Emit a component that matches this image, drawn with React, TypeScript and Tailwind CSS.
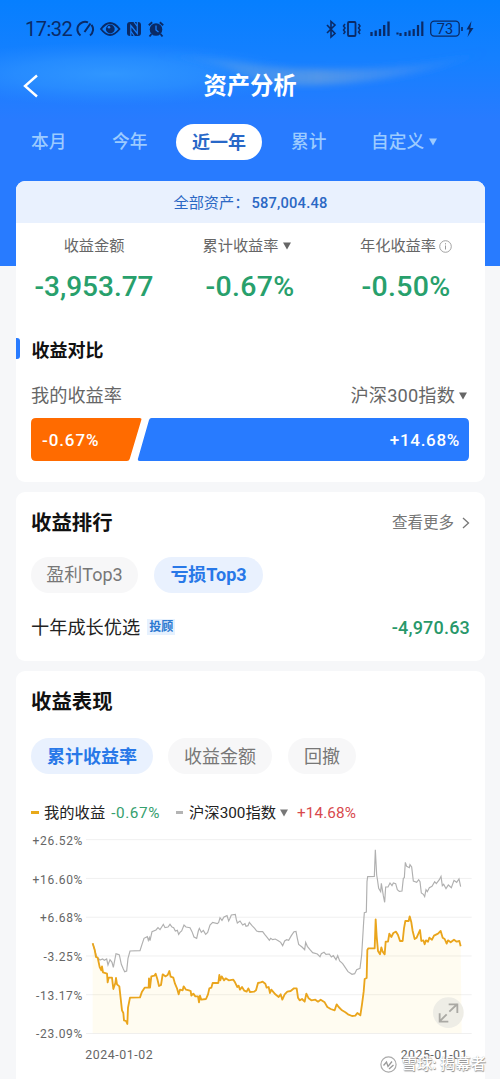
import React from 'react';

const GREY_SERIES =
  '278,355 284,375 290,396 300,405 308,402 313,406 320,402 324,420 330,404 336,412 340,427 348,386 354,388 358,390 364,418 370,432 374,440 380,438 384,400 390,378 420,377 426,358 432,340 442,335 445,346 448,338 450,347 456,320 468,315 474,308 480,314 485,306 490,298 495,308 504,306 510,298 516,306 521,308 526,318 532,316 536,328 540,322 545,318 552,300 558,306 570,308 576,320 582,336 590,340 595,318 598,310 604,322 610,316 617,328 623,322 630,300 638,292 652,296 656,292 660,278 666,286 672,276 681,272 686,288 690,280 694,270 706,268 709,284 712,294 720,288 728,300 735,296 738,304 744,302 748,292 756,302 764,310 770,318 776,320 788,320 794,328 802,338 808,346 812,340 818,344 826,342 836,348 842,352 848,362 854,348 860,344 866,346 874,332 882,320 888,319 892,340 896,358 906,366 914,374 917,352 922,364 930,374 938,383 952,387 960,395 964,386 972,382 978,388 988,387 994,396 1000,392 1008,404 1013,392 1019,408 1028,416 1036,428 1044,440 1056,448 1064,446 1070,434 1080,430 1085,390 1091,290 1093,263 1099,261 1101,170 1103,155 1123,154 1126,74 1130,150 1132,162 1136,190 1142,200 1144,175 1150,212 1154,232 1157,186 1164,186 1170,174 1176,182 1180,174 1187,176 1192,194 1198,199 1206,198 1210,160 1213,158 1216,112 1220,124 1228,128 1230,119 1235,126 1240,168 1250,172 1256,164 1260,170 1264,204 1270,208 1274,215 1278,194 1282,200 1288,188 1296,184 1304,170 1309,176 1318,164 1323,154 1327,182 1331,178 1338,191 1345,180 1354,188 1362,166 1370,172 1377,162 1380,176 1382,185';

const GOLD_SERIES =
  '278,355 284,374 288,396 293,398 299,426 304,436 306,424 309,442 321,446 323,472 326,458 336,458 340,492 346,474 348,459 351,478 358,484 362,520 366,556 370,564 372,586 378,588 382,597 384,548 390,518 420,517 426,500 434,488 446,488 447,460 450,488 454,454 463,452 467,446 472,462 477,483 483,480 488,448 496,454 503,450 508,438 512,455 520,458 525,476 531,490 536,508 540,494 548,496 551,484 558,494 567,496 572,498 574,512 580,506 586,514 594,514 597,532 600,512 604,524 618,522 624,508 628,490 634,488 638,474 655,474 658,450 661,466 665,454 672,466 677,460 686,466 700,464 705,472 712,486 716,482 720,494 726,486 733,497 740,500 745,490 750,501 762,500 768,496 774,474 782,472 788,470 796,476 800,488 806,486 810,504 814,494 826,508 836,516 842,508 847,524 854,508 862,500 872,498 882,490 890,490 894,518 899,526 906,522 914,530 919,506 926,520 934,526 946,524 954,530 962,524 974,532 982,546 992,552 1004,556 1010,538 1016,546 1026,556 1036,562 1044,568 1056,573 1066,572 1072,564 1081,571 1086,538 1091,500 1094,462 1100,459 1102,375 1105,370 1124,370 1127,283 1130,334 1134,378 1140,388 1144,367 1148,380 1154,388 1157,350 1164,350 1168,326 1174,336 1180,324 1188,320 1194,330 1200,348 1208,348 1212,310 1216,288 1226,288 1229,274 1234,292 1238,318 1244,342 1250,338 1260,315 1264,348 1270,346 1274,358 1278,346 1284,350 1288,338 1296,344 1302,332 1314,326 1322,318 1328,338 1334,342 1340,356 1344,346 1352,352 1362,344 1370,350 1378,348 1382,364';

const Y_LABELS = ['+26.52%', '+16.60%', '+6.68%', '-3.25%', '-13.17%', '-23.09%'];

const Caret: React.FC<{ className?: string }> = ({ className = '' }) => (
  <svg viewBox="0 0 8 8" className={`h-2 w-2 fill-current ${className}`}>
    <path d="M0 .5h8L4 7.5z" />
  </svg>
);

const StatusBar = () => (
  <div className="flex h-[57px] items-center pl-[25px] pr-[25px] text-[#0a2a66]">
    <span className="w-[50px] text-[20px] leading-none tracking-[-0.5px]">17:32</span>
    <svg width="92" height="20" viewBox="0 0 92 20" fill="none" stroke="currentColor" strokeWidth="1.6" className="ml-px">
      {/* gauge */}
      <path d="M4.500 16.500A7.600 7.600 0 0 1 12 3.400M15.500 5.800A7.600 7.600 0 0 1 14 16.500M8.500 13l6-8.500" strokeWidth="2" />
      {/* eye */}
      <path d="M25 10q9-12 18.500 0q-9.500 12-18.500 0z" strokeWidth="1.8" />
      <circle cx="34.300" cy="10" r="4.400" fill="currentColor" stroke="none" />
      <circle cx="33" cy="8.300" r="1.300" fill="#1a80ff" stroke="none" />
      {/* nfc */}
      <rect x="51" y="3" width="14" height="14" rx="3" fill="currentColor" stroke="none" />
      <path d="M54.800 17V6.500l6.500 8V3M58 3l3.300 4.500M54.800 12l3.500 5" stroke="#147fff" strokeWidth="1.200" />
      {/* alarm */}
      <circle cx="80" cy="10.500" r="6.300" fill="currentColor" stroke="none" />
      <path d="M72.800 6.200l3.400-3M87.200 6.200l-3.400-3M75.500 15l-2 2.500M84.500 15l2 2.500" strokeWidth="1.900" />
      <path d="M80 6.500v4.500l2.500 2" stroke="#147fff" strokeWidth="1.300" />
    </svg>
    <svg width="150" height="20" viewBox="0 0 150 20" fill="none" stroke="currentColor" className="ml-auto">
      {/* bluetooth */}
      <path d="M2 6l8 8.500-4 3.500V2.500l4 3.500L2 14" strokeWidth="1.600" />
      {/* vibrate */}
      <rect x="23" y="3" width="7.500" height="14" rx="1" strokeWidth="1.800" />
      <path d="M20 5l-1.500 2 1.500 2-1.500 2 1.500 2-1.500 2M33.500 5L35 7l-1.500 2 1.500 2-1.500 2 1.500 2" strokeWidth="1.500" />
      {/* signals */}
      <path d="M46.500 17v-4M50.700 17v-5.500M55 17v-7M59.200 17V6M63.500 17V2.500" strokeWidth="2.300" />
      <path d="M72.500 13.500v2M75.500 14v3M80.500 17v-4M84.500 17v-5.500M88.700 17v-7M93 17V6M97.300 17V2.500" strokeWidth="2.200" />
      {/* battery */}
      <rect x="105.700" y="2.200" width="28.500" height="15" rx="3.600" strokeWidth="1.300" />
      <path d="M137 8v4" strokeWidth="1.600" />
      <path d="M146.500 2l-5 8.500h3L142.500 18l6-9h-3.200z" fill="currentColor" stroke="none" />
      <text x="120" y="14.800" textAnchor="middle" fontSize="14.500" fill="currentColor" stroke="none">73</text>
    </svg>
  </div>
);

const HeaderGlow = () => (
  <svg className="absolute left-0 top-0 -z-10" width="500" height="266" viewBox="0 0 500 266">
    <defs>
      <linearGradient id="sky" x1="0" y1="0" x2="0" y2="1">
        <stop offset="0" stopColor="#067fff" />
        <stop offset=".22" stopColor="#1580ff" />
        <stop offset=".45" stopColor="#287bff" />
        <stop offset="1" stopColor="#287bff" />
      </linearGradient>
      <radialGradient id="glow">
        <stop offset="0" stopColor="#3399ff" stopOpacity=".9" />
        <stop offset=".5" stopColor="#2f94ff" stopOpacity=".6" />
        <stop offset="1" stopColor="#2a8aff" stopOpacity="0" />
      </radialGradient>
      <linearGradient id="ribbon" x1="0" y1="0" x2="1" y2="0">
        <stop offset="0" stopColor="#4a9cf5" stopOpacity="0" />
        <stop offset=".3" stopColor="#5099ec" stopOpacity=".7" />
        <stop offset=".5" stopColor="#5a9ae6" stopOpacity=".85" />
        <stop offset=".7" stopColor="#4792f2" stopOpacity=".7" />
        <stop offset="1" stopColor="#3a8cf8" stopOpacity="0" />
      </linearGradient>
      <filter id="soft" x="-10%" y="-50%" width="120%" height="200%">
        <feGaussianBlur stdDeviation="3" />
      </filter>
    </defs>
    <rect width="500" height="266" fill="url(#sky)" />
    <ellipse cx="110" cy="74" rx="190" ry="32" fill="url(#glow)" />
    <path d="M150 55Q210 57 250 64T360 69T490 50Q430 76 350 83T240 74T150 55z" fill="url(#ribbon)" filter="url(#soft)" />
  </svg>
);

const RANGE_TEXT = 'text-[17.700px] font-medium text-[#9ccbff]';

const RangeTabs = () => (
  <div className="flex h-[54px] items-center pl-[31px]">
    <span className={`w-[81px] pt-px ${RANGE_TEXT}`}>本月</span>
    <span className={`w-16 pt-px ${RANGE_TEXT}`}>今年</span>
    <span className="flex h-9 w-[86px] items-center justify-center rounded-full bg-white pt-px text-[18px] font-bold text-[#2868c8]">
      近一年
    </span>
    <span className={`ml-[29px] w-[80px] pt-px ${RANGE_TEXT}`}>累计</span>
    <span className={`flex items-center gap-[5px] pt-px ${RANGE_TEXT}`}>
      自定义
      <Caret />
    </span>
  </div>
);

const Stat: React.FC<{ label: string; value: string; extra?: React.ReactNode; className: string }> = ({ label, value, extra, className }) => (
  <div className={`flex flex-col items-center ${className}`}>
    <div className="flex h-6 items-center text-[15.200px] text-[#666]">
      {label}
      {extra}
    </div>
    <div className="mt-2.5 h-[38px] leading-[38px] font-medium text-[#28a06c]">{value}</div>
  </div>
);

const SummaryCard = () => (
  <section className="h-[301px] overflow-hidden rounded-[9px] bg-white">
    <div className="flex h-[42px] items-center justify-center bg-[#e9f1fe] pt-[3px] text-[15.200px] text-[#2b68c4]">
      <span>全部资产：</span>
      <span className="ml-[2px] text-[14.700px] font-medium tracking-[0.200px]">587,004.48</span>
    </div>
    <div className="flex pt-[11px]">
      <Stat label="收益金额" value="-3,953.77" className="w-[156px] text-[28px]" />
      <Stat
        label="累计收益率"
        value="-0.67%"
        extra={<Caret className="ml-[5px]" />}
        className="-ml-[2px] w-[158px] text-[28.500px] tracking-[0.300px] [&>:first-child]:-ml-1 [&>:first-child]:tracking-normal [&>:last-child]:ml-[2px]"
      />
      <Stat
        label="年化收益率"
        value="-0.50%"
        extra={
          <svg className="ml-[3px] h-[13px] w-[13px]" viewBox="0 0 13 13" fill="none" stroke="#999">
            <circle cx="6.500" cy="6.500" r="5.800" strokeWidth=".9" />
            <path d="M6.500 5.500v4M6.500 3.200v1.200" />
          </svg>
        }
        className="w-[156px] text-[28.500px] tracking-[0.300px] [&>:first-child]:tracking-normal"
      />
    </div>
    <div className="mt-[29px] flex h-7 items-center">
      <i className="-mt-[2px] h-[21px] w-[3.500px] rounded-r-[3px] bg-[#287bff]" />
      <h2 className="ml-[12px] pt-[3px] text-[18px] font-bold leading-7 text-[#111]">收益对比</h2>
    </div>
    <div className="mx-[15px] mt-[19px] flex h-7 items-center justify-between text-[18.200px] text-[#666]">
      <span>我的收益率</span>
      <span className="mr-[3px] flex items-center gap-1 tracking-[0.150px]">
        沪深300指数
        <Caret />
      </span>
    </div>
    <div className="relative mx-[15px] mt-[8px] flex h-[43px] items-center justify-between px-[11px] pt-[2px] text-[17px] font-medium text-white">
      <svg className="absolute left-0 top-0" width="438" height="43" viewBox="0 0 438 43">
        <path d="M5 0H108.500Q111 0 110.300 2L98.700 41Q98 43 96 43H5Q0 43 0 38V5Q0 0 5 0z" fill="#ff6b00" />
        <path d="M120.500 0H433Q438 0 438 5V38Q438 43 433 43H109Q106.200 43 107 40.500L118 2Q118.700 0 120.500 0z" fill="#287bff" />
      </svg>
      <span className="relative tracking-[0.900px]">-0.67%</span>
      <span className="relative -mr-px tracking-[0.700px]">+14.68%</span>
    </div>
  </section>
);

const Pill: React.FC<{ children: React.ReactNode; active?: boolean; className: string }> = ({ children, active, className }) => (
  <span
    className={`flex h-9 items-center justify-center rounded-full text-[18px] ${
      active ? 'bg-[#e9f1fe] font-bold text-[#2878e8]' : 'bg-[#f7f7f8] text-[#777]'
    } ${className}`}
  >
    {children}
  </span>
);

const RankingCard = () => (
  <section className="mt-[9.500px] h-[169px] rounded-[9px] bg-white px-[15px] pt-[17px]">
    <div className="flex h-[30px] items-center justify-between">
      <h2 className="text-[20.400px] font-bold text-[#111]">收益排行</h2>
      <span className="flex items-center text-[15.500px] text-[#777]">
        查看更多
        <svg className="-mt-[2px] ml-[8px]" width="8" height="12" viewBox="0 0 8 12" fill="none" stroke="currentColor" strokeWidth="1.300">
          <path d="M1 1l5.500 5L1 11" />
        </svg>
      </span>
    </div>
    <div className="mt-[18px] flex gap-4">
      <Pill className="w-[107px]">盈利Top3</Pill>
      <Pill active className="w-[109px]">亏损Top3</Pill>
    </div>
    <div className="mt-[21px] flex h-7 items-center">
      <span className="text-[18.200px] text-[#222]">十年成长优选</span>
      <span className="-mt-px ml-[7px] flex h-4 w-[28px] items-center justify-center bg-[#e6f1fe] text-[12px] font-bold text-[#2b78d0]">投顾</span>
      <span className="ml-auto text-[18px] font-medium tracking-[0.200px] text-[#28986a]">-4,970.63</span>
    </div>
  </section>
);

const PerformanceChart = () => (
  <svg className="block" width="469" height="254" viewBox="48 0 1407 762">
    {Y_LABELS.map((label, i) => (
      <g key={label}>
        <line x1="258" x2="1415" y1={44 + i * 116.3} y2={44 + i * 116.3} stroke="#f0f0f0" strokeWidth="3" />
        <text x="249" y={60 + i * 116} textAnchor="end" fontSize="36" letterSpacing="2" fill="#666">
          {label}
        </text>
      </g>
    ))}
    <polygon points={`278,625 ${GOLD_SERIES} 1385,625`} fill="#ffd83a" fillOpacity=".07" />
    <polyline points={GREY_SERIES} fill="none" stroke="#b0b0b0" strokeWidth="3.500" />
    <polyline points={GOLD_SERIES} fill="none" stroke="#eaa51c" strokeWidth="5.500" strokeLinejoin="round" />
    <circle cx="1345" cy="563" r="46" fill="#eeede6" />
    <path d="M1348 560l24-23M1346 538h26v26M1340 568l-21 21M1319 565v25h26" fill="none" stroke="#aaa9a4" strokeWidth="5.500" />
    <text x="256" y="702" fontSize="37" letterSpacing="1.700" fill="#666">2024-01-02</text>
    <text x="1202" y="702" fontSize="37" letterSpacing="1.500" fill="#666">2025-01-01</text>
  </svg>
);

const Watermark = () => (
  <div className="absolute right-[14px] top-[1053px] flex items-center text-[15.300px] font-medium leading-[22px] text-white [text-shadow:0.500px_0.500px_1px_#888,0_0_1px_#aaa]">
    <svg className="mr-[5px]" width="17" height="17" viewBox="0 0 17 17" fill="none">
      <circle cx="8.500" cy="8.500" r="7.600" fill="#fff" fillOpacity=".6" stroke="#aaa" strokeWidth="1.200" />
      <path d="M3.500 9.500l3-3.500 1.500 4.500 4-5M9 13l4.500-4" stroke="#999" strokeWidth="1.300" />
    </svg>
    雪球: 揭幕者
  </div>
);

const PerformanceCard = () => (
  <section className="mt-[10.500px] h-[408px] rounded-t-[9px] bg-white pt-4">
    <h2 className="ml-[15px] h-[30px] text-[20.400px] font-bold leading-[30px] text-[#111]">收益表现</h2>
    <div className="ml-[15px] mt-[21px] flex">
      <Pill active className="w-[122px]">累计收益率</Pill>
      <Pill className="ml-[15px] w-[104px]">收益金额</Pill>
      <Pill className="ml-4 w-[68px]">回撤</Pill>
    </div>
    <div className="ml-[15px] mt-[27px] flex h-6 items-center text-[15.300px] text-[#222]">
      <i className="-mt-[2px] h-[3px] w-2 bg-[#e8a91a]" />
      <span className="ml-[5px]">我的收益</span>
      <span className="ml-[6px] tracking-[0.600px] text-[#35a06e]">-0.67%</span>
      <i className="-mt-[2px] ml-4 h-[3px] w-[7px] bg-[#b4b4b4]" />
      <span className="ml-[6px]">沪深300指数</span>
      <Caret className="ml-1 text-[#777]" />
      <span className="ml-[9px] tracking-[0.100px] text-[#d8494d]">+14.68%</span>
    </div>
    <PerformanceChart />
  </section>
);

export default function App() {
  return (
    <div className="relative isolate h-[1079px] w-[500px] overflow-hidden bg-[#f6f7f9] font-[Roboto,'Noto_Sans_CJK_SC',sans-serif]">
      <HeaderGlow />
      <StatusBar />
      <div className="flex h-[58px] items-center px-[23px]">
        <svg className="-mt-px" width="16" height="24" viewBox="0 0 16 24" fill="none" stroke="#fff" strokeWidth="2.400">
          <path d="M14 1.500L2 12l12 10.500" />
        </svg>
        <h1 className="mr-4 flex-1 pt-px text-center text-[23.300px] font-bold text-white">资产分析</h1>
      </div>
      <RangeTabs />
      <main className="ml-4 mr-[15px] mt-3">
        <SummaryCard />
        <RankingCard />
        <PerformanceCard />
      </main>
      <Watermark />
    </div>
  );
}
